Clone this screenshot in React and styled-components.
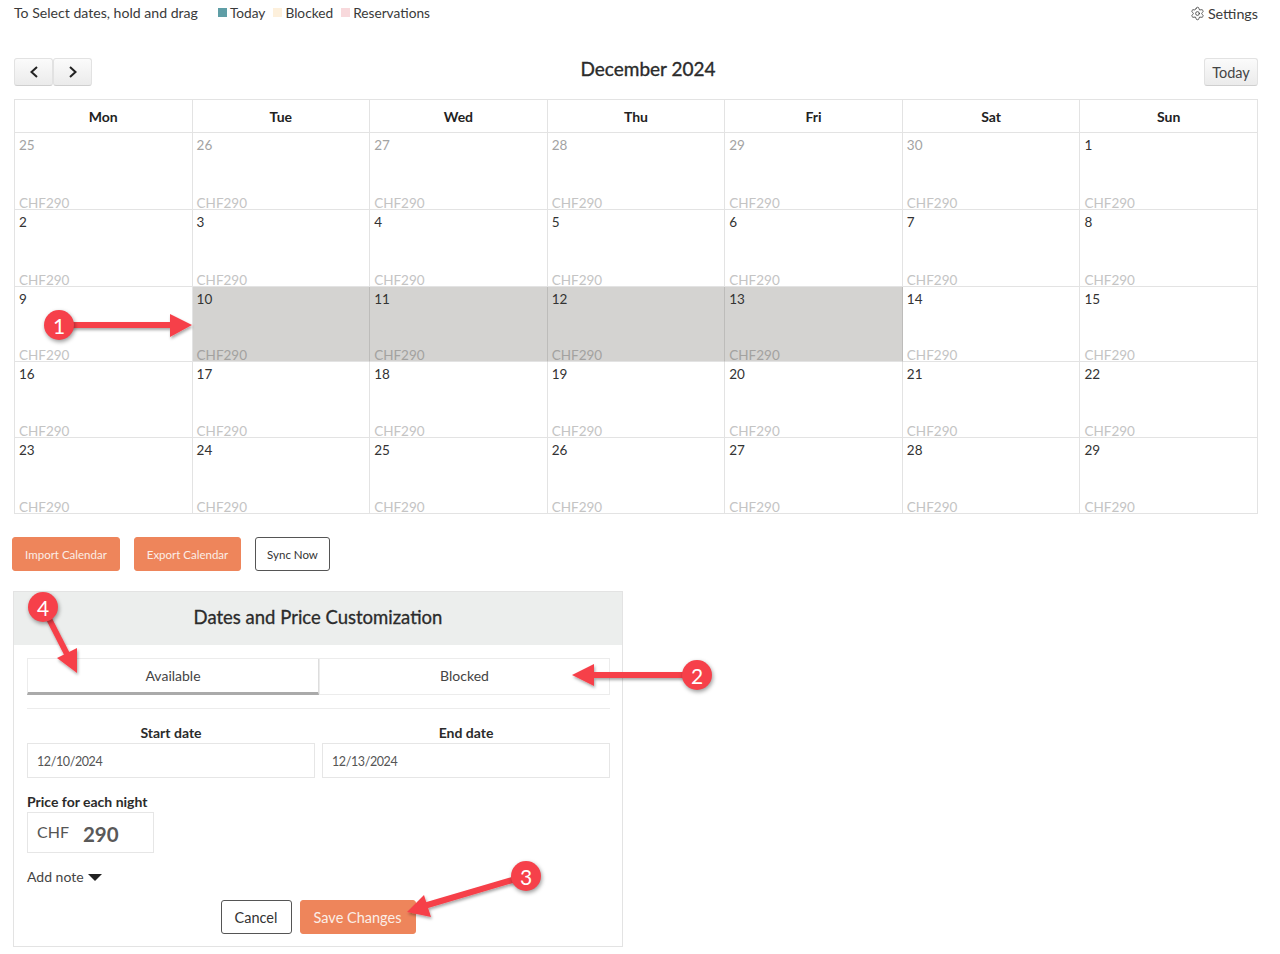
import React from "react";
import styled, { createGlobalStyle } from "styled-components";
import { Settings } from "lucide-react";

const Global = createGlobalStyle`
  body {
    margin: 0;
    background: #fff;
    color: #3a3a3a;
    font-family: "Lato", "Liberation Sans", sans-serif;
    font-size: 14px;
  }
`;

const Page = styled.div`
  position: relative;
  width: 1280px;
  height: 954px;
  overflow: hidden;
  box-sizing: border-box;
  padding: 3px 22px 0 13px;
`;

const TopBar = styled.div`
  display: flex;
  align-items: center;
  height: 18px;
  padding-left: 1px;
`;

const Hint = styled.span`
  font-size: 14.1px;
  margin-right: 20px;
`;

const LegendItem = styled.span`
  display: inline-flex;
  align-items: center;
  gap: 3px;
  font-size: 13.7px;
  margin-right: 8px;
  &::before {
    content: "";
    width: 9px;
    height: 9px;
    background: ${(props) => props.$color};
  }
`;

const SettingsLink = styled.span`
  margin-left: auto;
  display: inline-flex;
  align-items: center;
  gap: 3px;
  font-size: 14.3px;
  margin-top: 2px;
`;

const Toolbar = styled.div`
  display: flex;
  align-items: center;
  justify-content: space-between;
  margin-top: 37px;
  height: 28px;
  padding-left: 1px;
`;

const NavGroup = styled.div`
  display: flex;
`;

const GrayButton = styled.button`
  box-sizing: border-box;
  height: 28px;
  width: ${(props) => props.$width || "39px"};
  padding: 0;
  display: flex;
  align-items: center;
  justify-content: center;
  border: 1px solid #e2e2e2;
  border-bottom-color: #cfcfcf;
  border-radius: 3px;
  background: linear-gradient(#fbfbfb, #ebebeb);
  color: #444;
  font-family: inherit;
  font-size: 14.5px;
`;

const MonthTitle = styled.h2`
  margin: -8px 0 0;
  font-size: 19px;
  font-weight: 400;
  -webkit-text-stroke: 0.35px #2b2b2b;
  color: #2b2b2b;
`;

const Calendar = styled.div`
  margin: 13px 0 0 1px;
  display: grid;
  grid-template-columns: repeat(7, 1fr);
  grid-template-rows: 33px 77px 76.5px 75.5px 76px 76px;
  border-top: 1px solid #e3e3e3;
  border-left: 1px solid #e3e3e3;
`;

const HeadCell = styled.div`
  display: flex;
  align-items: center;
  justify-content: center;
  font-weight: 700;
  font-size: 14px;
  color: #222;
  border-right: 1px solid #e3e3e3;
  border-bottom: 1px solid #e3e3e3;
`;

const DayCell = styled.div`
  box-sizing: border-box;
  min-height: 0;
  display: flex;
  flex-direction: column;
  justify-content: space-between;
  padding: 3px 4px 0;
  background: ${(props) => (props.$selected ? "#d4d3d1" : "#fff")};
  border-right: 1px solid ${(props) => (props.$selected ? "#bdbcba" : "#e3e3e3")};
  border-bottom: 1px solid #e3e3e3;
`;

const DayNum = styled.span`
  font-size: 13.5px;
  line-height: 18px;
  color: ${(props) => (props.$muted ? "#a3a3a3" : "#333")};
`;

const DayPrice = styled.span`
  font-size: 13.5px;
  line-height: 14px;
  margin-bottom: -1px;
  color: ${(props) => (props.$selected ? "#a3a2a0" : "#c4c4c4")};
`;

const ActionRow = styled.div`
  display: flex;
  gap: 14px;
  margin: 23px 0 0 -1px;
`;

const Btn = styled.button`
  box-sizing: border-box;
  height: 34px;
  width: ${(props) => props.$width};
  padding: 0;
  border-radius: 3px;
  font-family: inherit;
  font-size: ${(props) => props.$size || "11.5px"};
  color: ${(props) => (props.$primary ? "#fbeee7" : "#333")};
  background: ${(props) => (props.$primary ? "#ee855b" : "#fff")};
  border: 1px solid ${(props) => (props.$primary ? "#ee855b" : "#555")};
`;

const Panel = styled.section`
  box-sizing: border-box;
  width: 610px;
  height: 356px;
  margin-top: 20px;
  border: 1px solid #e3e3e3;
`;

const PanelHead = styled.h3`
  margin: 0;
  height: 53px;
  box-sizing: border-box;
  padding-bottom: 3px;
  display: flex;
  align-items: center;
  justify-content: center;
  background: #eceeed;
  font-size: 18.5px;
  font-weight: 400;
  -webkit-text-stroke: 0.3px #2b2b2b;
  color: #2b2b2b;
`;

const PanelBody = styled.div`
  padding: 13px 12px 0 13px;
`;

const Tabs = styled.div`
  display: grid;
  grid-template-columns: 292px 1fr;
  height: 37px;
  border: 1px solid #ececec;
  border-left: 0;
  box-sizing: border-box;
`;

const Tab = styled.div`
  display: flex;
  align-items: center;
  justify-content: center;
  box-sizing: border-box;
  font-size: 14px;
  color: #444;
  border-left: 1px solid #ececec;
  border-right: ${(props) => (props.$active ? "1px solid #ddd" : "0")};
  border-bottom: ${(props) => (props.$active ? "3px solid #aaa" : "0")};
  margin-bottom: ${(props) => (props.$active ? "-1px" : "0")};
  padding-bottom: ${(props) => (props.$active ? "0" : "2px")};
`;

const Divider = styled.hr`
  margin: 13px 0 0;
  border: 0;
  border-top: 1px solid #ececec;
`;

const DateGrid = styled.div`
  display: grid;
  grid-template-columns: 288px 288px;
  column-gap: 7px;
  margin-top: 15px;
`;

const DateField = styled.div`
  display: flex;
  flex-direction: column;
`;

const Label = styled.label`
  display: block;
  margin-bottom: 1px;
  font-size: 14px;
  line-height: 18px;
  font-weight: 700;
  color: #2b2b2b;
  text-align: ${(props) => (props.$center ? "center" : "left")};
`;

const TextBox = styled.div`
  box-sizing: border-box;
  height: 35px;
  display: flex;
  align-items: center;
  padding: 2px 0 0 9px;
  border: 1px solid #e6e6e6;
  font-size: 12.5px;
  letter-spacing: -0.4px;
  color: #555;
`;

const PriceBlock = styled.div`
  margin-top: 15px;
`;

const PriceBox = styled.div`
  box-sizing: border-box;
  width: 127px;
  height: 41px;
  display: flex;
  align-items: center;
  gap: 14px;
  padding-left: 9px;
  border: 1px solid #e6e6e6;
`;

const Currency = styled.span`
  font-size: 16px;
  color: #555;
  margin-top: -3px;
`;

const Amount = styled.span`
  font-size: 20.5px;
  font-weight: 700;
  color: #595959;
  margin-top: 3px;
`;

const AddNote = styled.div`
  display: flex;
  align-items: center;
  gap: 4px;
  margin-top: 15px;
  font-size: 14px;
  color: #444;
  &::after {
    content: "";
    border-left: 7px solid transparent;
    border-right: 7px solid transparent;
    border-top: 7px solid #222;
    margin-top: 2px;
  }
`;

const FormActions = styled.div`
  display: flex;
  justify-content: center;
  gap: 8px;
  margin-top: 15px;
  padding-right: 1px;
`;

const Arrows = styled.svg`
  position: absolute;
  left: 0;
  top: 0;
  pointer-events: none;
`;

const Badge = styled.div`
  position: absolute;
  left: ${(props) => props.$x - 15}px;
  top: ${(props) => props.$y - 15}px;
  width: 30px;
  height: 30px;
  border-radius: 50%;
  display: flex;
  align-items: center;
  justify-content: center;
  background: #f6404a;
  color: #fff;
  font-size: 21px;
  box-shadow: 1px 2px 4px rgba(0, 0, 0, 0.4);
`;

const days = ["Mon", "Tue", "Wed", "Thu", "Fri", "Sat", "Sun"];

const cells = [
  25, 26, 27, 28, 29, 30, 1, 2, 3, 4, 5, 6, 7, 8, 9, 10, 11, 12, 13, 14, 15, 16,
  17, 18, 19, 20, 21, 22, 23, 24, 25, 26, 27, 28, 29,
];

const arrows = [
  { line: "59,325 175,325", head: "192,325 170,314 170,337" },
  { line: "697,675 590,675", head: "572,675 594,664 594,686" },
  { line: "526,876 424,906", head: "407,912 424,895 431,917" },
  { line: "43,607 70,660", head: "77,673 57,658 77,648" },
];

const badges = [
  { n: 1, x: 59, y: 325 },
  { n: 2, x: 697, y: 675 },
  { n: 3, x: 526, y: 876 },
  { n: 4, x: 43, y: 607 },
];

export default function App() {
  return (
    <Page>
      <Global />
      <TopBar>
        <Hint>To Select dates, hold and drag</Hint>
        <LegendItem $color="#5f9ea6">Today</LegendItem>
        <LegendItem $color="#fdf0dc">Blocked</LegendItem>
        <LegendItem $color="#f8d9dc">Reservations</LegendItem>
        <SettingsLink>
          <Settings size={15} strokeWidth={1.3} />
          Settings
        </SettingsLink>
      </TopBar>

      <Toolbar>
        <NavGroup>
          <GrayButton aria-label="Previous">
            <svg width="10" height="12" viewBox="0 0 10 12" fill="none" stroke="#222" strokeWidth="2">
              <path d="M8 1 2.5 6 8 11" />
            </svg>
          </GrayButton>
          <GrayButton aria-label="Next">
            <svg width="10" height="12" viewBox="0 0 10 12" fill="none" stroke="#222" strokeWidth="2">
              <path d="M2 1 7.5 6 2 11" />
            </svg>
          </GrayButton>
        </NavGroup>
        <MonthTitle>December 2024</MonthTitle>
        <GrayButton $width="54px">Today</GrayButton>
      </Toolbar>

      <Calendar>
        {days.map((d) => (
          <HeadCell key={d}>{d}</HeadCell>
        ))}
        {cells.map((n, i) => {
          const selected = i >= 15 && i <= 18;
          return (
            <DayCell key={i} $selected={selected}>
              <DayNum $muted={i < 6}>{n}</DayNum>
              <DayPrice $selected={selected}>CHF290</DayPrice>
            </DayCell>
          );
        })}
      </Calendar>

      <ActionRow>
        <Btn $primary $width="108px">Import Calendar</Btn>
        <Btn $primary $width="107px">Export Calendar</Btn>
        <Btn $width="75px">Sync Now</Btn>
      </ActionRow>

      <Panel>
        <PanelHead>Dates and Price Customization</PanelHead>
        <PanelBody>
          <Tabs>
            <Tab $active>Available</Tab>
            <Tab>Blocked</Tab>
          </Tabs>
          <Divider />
          <DateGrid>
            <DateField>
              <Label $center>Start date</Label>
              <TextBox>12/10/2024</TextBox>
            </DateField>
            <DateField>
              <Label $center>End date</Label>
              <TextBox>12/13/2024</TextBox>
            </DateField>
          </DateGrid>
          <PriceBlock>
            <Label>Price for each night</Label>
            <PriceBox>
              <Currency>CHF</Currency>
              <Amount>290</Amount>
            </PriceBox>
          </PriceBlock>
          <AddNote>Add note</AddNote>
          <FormActions>
            <Btn $width="71px" $size="14.5px">Cancel</Btn>
            <Btn $primary $width="116px" $size="14.5px">Save Changes</Btn>
          </FormActions>
        </PanelBody>
      </Panel>

      <Arrows width="1280" height="954" viewBox="0 0 1280 954">
        <defs>
          <filter id="arrowShadow" x="-20%" y="-50%" width="140%" height="200%">
            <feDropShadow dx="1" dy="2" stdDeviation="1.5" floodColor="#000" floodOpacity="0.35" />
          </filter>
        </defs>
        {arrows.map((a) => (
          <g key={a.head} filter="url(#arrowShadow)">
            <polyline points={a.line} stroke="#f6404a" strokeWidth="6" fill="none" />
            <polygon points={a.head} fill="#f6404a" />
          </g>
        ))}
      </Arrows>
      {badges.map((b) => (
        <Badge key={b.n} $x={b.x} $y={b.y}>
          {b.n}
        </Badge>
      ))}
    </Page>
  );
}
